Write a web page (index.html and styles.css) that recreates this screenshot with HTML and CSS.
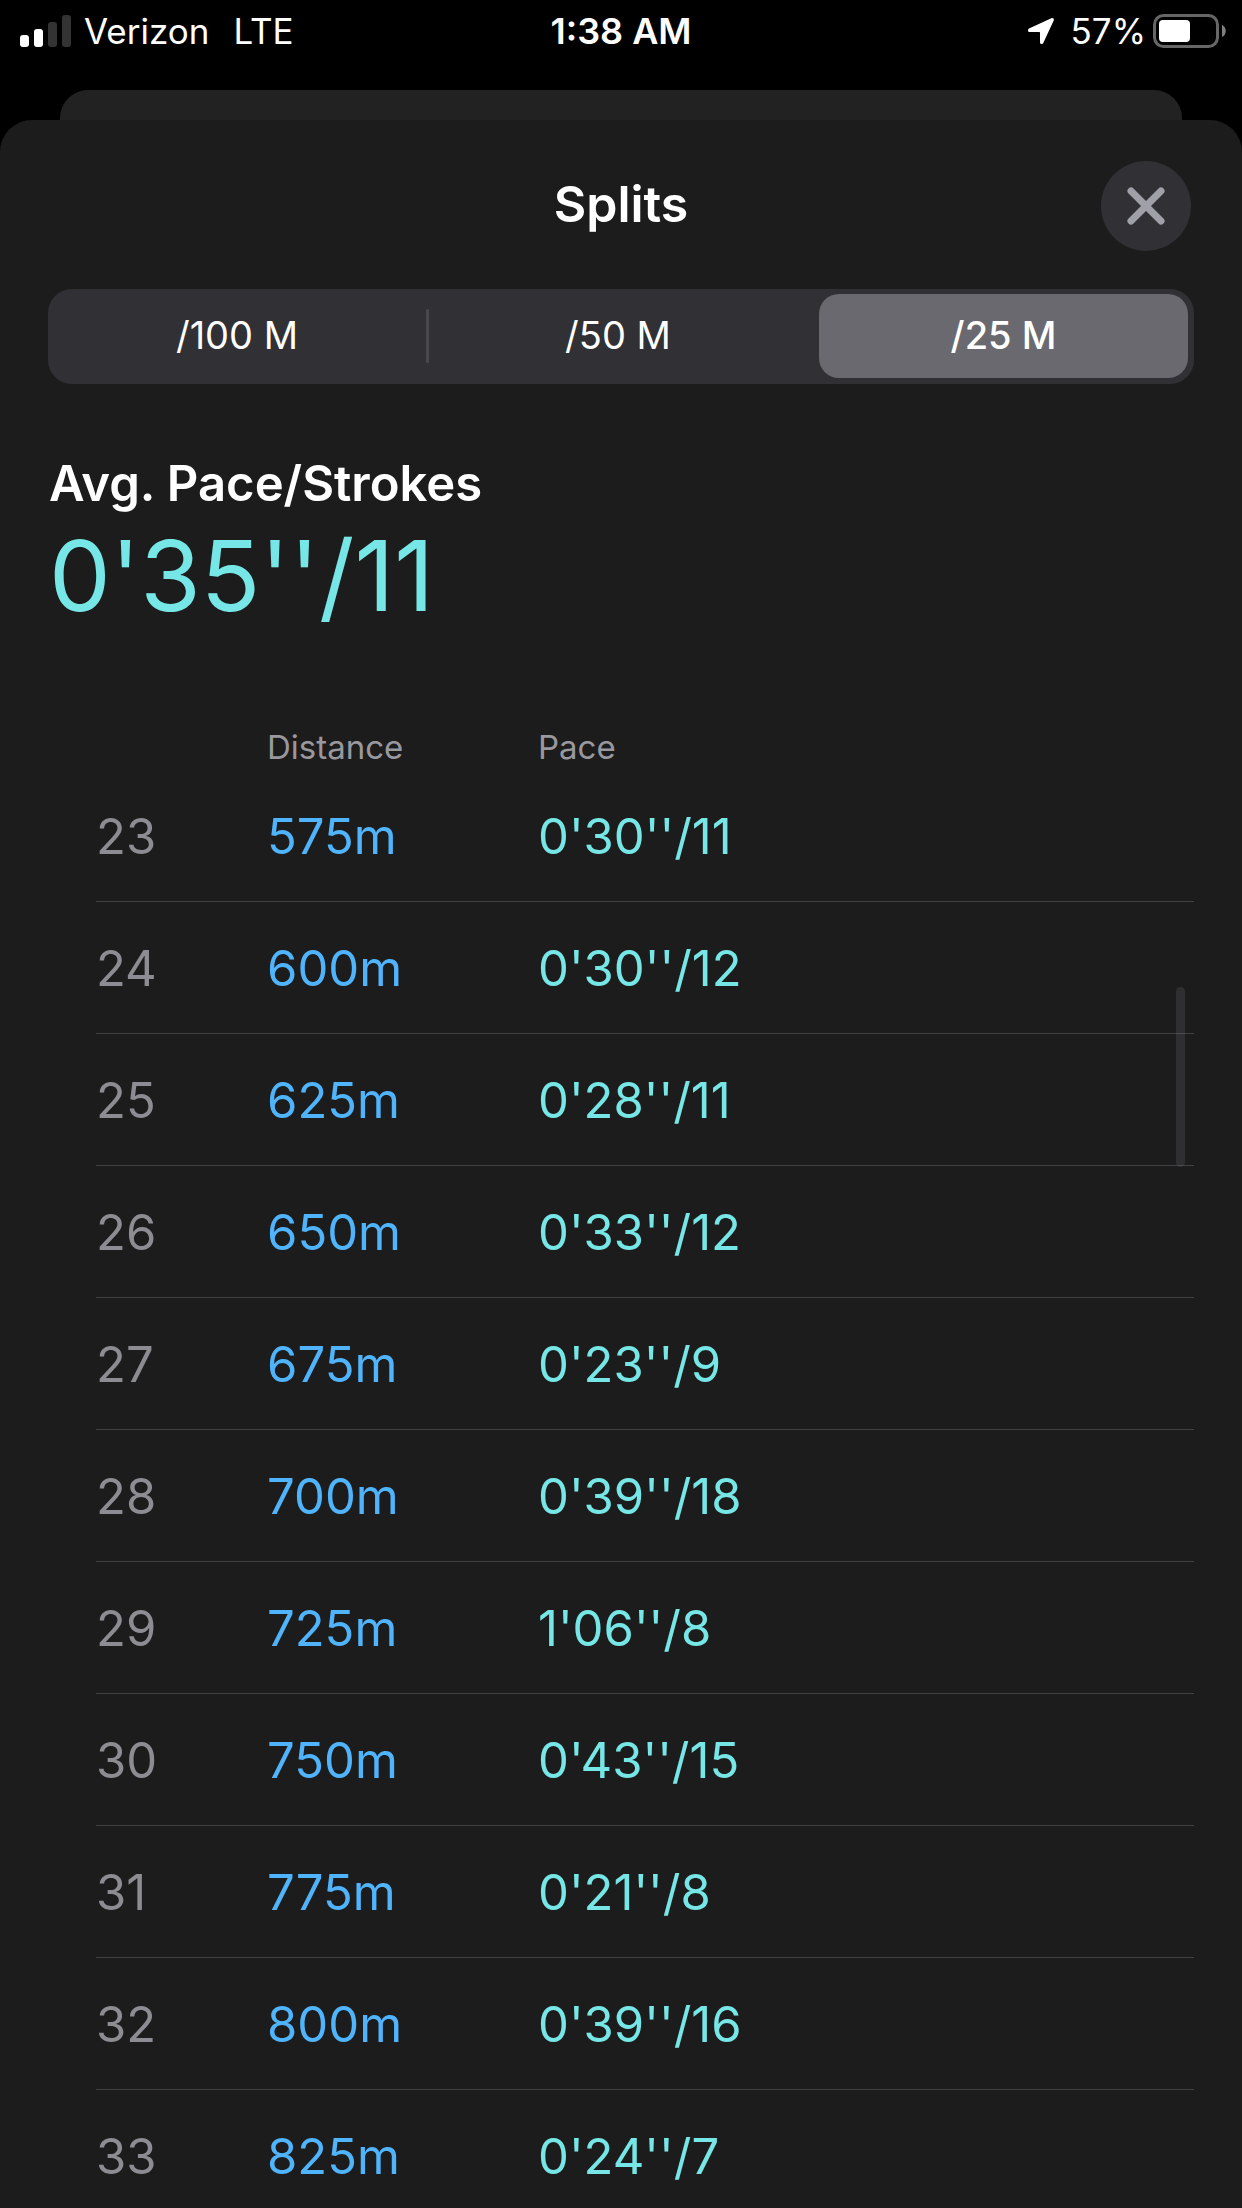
FILE: index.html
```html
<!DOCTYPE html>
<html lang="en">
<head>
<meta charset="utf-8">
<meta name="viewport" content="width=device-width, initial-scale=1">
<title>Splits</title>
<link rel="stylesheet" href="styles.css">
</head>
<body>
<div class="screen">
  <header class="status">
    <div class="status-side">
      <svg class="signal" width="52" height="32" viewBox="0 0 52 32" aria-hidden="true">
        <rect x="0" y="20" width="9" height="12" rx="3" fill="#fff"/>
        <rect x="14" y="14" width="9" height="18" rx="3" fill="#fff"/>
        <rect x="28" y="7" width="9" height="25" rx="3" fill="#333"/>
        <rect x="42" y="0" width="9" height="32" rx="3" fill="#333"/>
      </svg>
      <span class="carrier">Verizon</span>
      <span class="network">LTE</span>
    </div>
    <div class="time">1:38 AM</div>
    <div class="status-side status-right">
      <svg class="location" width="26" height="26" viewBox="0 0 26 26" aria-hidden="true">
        <path d="M23.3.3 1 10.6C-.5 11.4-.3 14 1.500 14H11c.8 0 1 .3 1 1v9.300c0 2 2.500 2.400 3.300.7L25.700 2.600C26.400 1 25-.5 23.300.3z" fill="#fff"/>
      </svg>
      <span class="percent">57%</span>
      <svg class="battery" width="74" height="34" viewBox="0 0 74 34" aria-hidden="true">
        <rect x="1.500" y="1.500" width="63" height="31" rx="9" fill="none" stroke="#666" stroke-width="3"/>
        <rect x="6" y="6" width="31" height="22" rx="4" fill="#fff"/>
        <path d="M69 11c5 2 5 10 0 12z" fill="#808080"/>
      </svg>
    </div>
  </header>
  <div class="back-card"></div>
  <main class="sheet">
    <div class="title-bar">
      <h1 class="title">Splits</h1>
      <button class="close" type="button" aria-label="Close">
        <svg width="38" height="38" viewBox="0 0 38 38" aria-hidden="true">
          <path d="M4 4 34 34M34 4 4 34" stroke="#a0a0a8" stroke-width="7" stroke-linecap="round"/>
        </svg>
      </button>
    </div>
    <div class="segments" role="group" aria-label="Split length">
      <button class="segment" type="button" aria-pressed="false">/100 M</button>
      <span class="divider"></span>
      <button class="segment" type="button" aria-pressed="false">/50 M</button>
      <button class="segment selected" type="button" aria-pressed="true">/25 M</button>
    </div>
    <section class="summary">
      <h2 class="summary-label">Avg. Pace/Strokes</h2>
      <p class="summary-value">0'35''/11</p>
    </section>
    <div class="list">
      <table class="splits">
        <thead>
          <tr><th class="col-number"></th><th class="col-distance" scope="col">Distance</th><th scope="col">Pace</th></tr>
        </thead>
        <tbody>
          <tr><td class="number">23</td><td class="distance">575m</td><td class="pace">0'30''/11</td></tr>
          <tr><td class="number">24</td><td class="distance">600m</td><td class="pace">0'30''/12</td></tr>
          <tr><td class="number">25</td><td class="distance">625m</td><td class="pace">0'28''/11</td></tr>
          <tr><td class="number">26</td><td class="distance">650m</td><td class="pace">0'33''/12</td></tr>
          <tr><td class="number">27</td><td class="distance">675m</td><td class="pace">0'23''/9</td></tr>
          <tr><td class="number">28</td><td class="distance">700m</td><td class="pace">0'39''/18</td></tr>
          <tr><td class="number">29</td><td class="distance">725m</td><td class="pace">1'06''/8</td></tr>
          <tr><td class="number">30</td><td class="distance">750m</td><td class="pace">0'43''/15</td></tr>
          <tr><td class="number">31</td><td class="distance">775m</td><td class="pace">0'21''/8</td></tr>
          <tr><td class="number">32</td><td class="distance">800m</td><td class="pace">0'39''/16</td></tr>
          <tr><td class="number">33</td><td class="distance">825m</td><td class="pace">0'24''/7</td></tr>
        </tbody>
      </table>
      <div class="scroll-thumb"></div>
    </div>
  </main>
</div>
</body>
</html>
```
FILE: styles.css
```css
* {
  box-sizing: border-box;
}

body {
  margin: 0;
  background: #000;
  color: #fff;
  font-family: Inter, "Liberation Sans", sans-serif;
}

h1,
h2,
p {
  margin: 0;
}

button {
  margin: 0;
  border: 0;
  padding: 0;
  background: none;
  color: inherit;
  font: inherit;
}

.screen {
  display: flex;
  flex-direction: column;
  height: 100vh;
  overflow: hidden;
}

/* Status bar */
.status {
  display: grid;
  grid-template-columns: 1fr auto 1fr;
  align-items: center;
  flex: none;
  height: 90px;
  padding: 0 15px 28px;
  font-size: 35px;
  line-height: 44px;
}

.status-side {
  display: flex;
  align-items: center;
}

.status-right {
  justify-content: flex-end;
}

.signal {
  margin-left: 5px;
}

.carrier {
  margin-left: 12px;
}

.network {
  margin-left: 24px;
}

.time {
  font-size: 36px;
  font-weight: 600;
}

.percent {
  margin: 0 7px 0 17px;
}

/* Sheets */
.back-card {
  flex: none;
  height: 30px;
  margin: 0 60px;
  border-radius: 28px 28px 0 0;
  background: #222223;
}

.sheet {
  display: flex;
  flex: 1;
  flex-direction: column;
  min-height: 0;
  border-radius: 32px 32px 0 0;
  background: #1c1c1c;
}

.title-bar {
  display: grid;
  grid-template-columns: 1fr auto 1fr;
  align-items: center;
  padding: 41px 51px 0;
}

.title {
  grid-column: 2;
  padding-bottom: 4px;
  font-size: 50px;
  font-weight: 600;
  line-height: 60px;
}

.close {
  display: flex;
  align-items: center;
  justify-content: center;
  justify-self: end;
  width: 90px;
  height: 90px;
  border-radius: 50%;
  background: #313035;
}

/* Segmented control */
.segments {
  display: flex;
  align-items: center;
  margin: 38px 48px 0;
  padding: 5px 6px 6px 0;
  border-radius: 24px;
  background: #313035;
  font-size: 38px;
}

.segment {
  flex: 42;
  height: 84px;
  padding-bottom: 2px;
  border-radius: 20px;
}

.divider {
  width: 3px;
  height: 54px;
  border-radius: 2px;
  background: #49484d;
}

.selected {
  flex: 41;
  margin-left: 12px;
  background: #6a696f;
  font-weight: 500;
}

/* Average */
.summary {
  padding: 70px 49px 0;
}

.summary-label {
  font-size: 49px;
  font-weight: 600;
  line-height: 60px;
}

.summary-value {
  padding-top: 2px;
  color: #76e7e6;
  font-size: 98px;
  line-height: 120px;
}

/* Table of splits */
.list {
  position: relative;
  flex: 1;
  min-height: 0;
  margin-top: 78px;
  padding: 0 48px 0 96px;
  overflow: hidden;
}

.splits {
  width: 100%;
  border-collapse: collapse;
  table-layout: fixed;
}

.splits th {
  height: 55px;
  padding: 13px 0 2px;
  color: #99989f;
  font-size: 33px;
  font-weight: 400;
  line-height: 40px;
  text-align: left;
}

.col-number {
  width: 171px;
}

.col-distance {
  width: 271px;
}

.splits td {
  height: 132px;
  padding: 4px 0 0;
  border-bottom: 1px solid #404042;
  font-size: 49px;
  line-height: 60px;
}

.number {
  color: #8d8c92;
}

.distance {
  color: #50b4fd;
}

.pace {
  color: #76e7e6;
}

.scroll-thumb {
  position: absolute;
  top: 273px;
  right: 57px;
  width: 9px;
  height: 180px;
  border-radius: 5px;
  background: rgba(120, 120, 128, 0.22);
}
```
